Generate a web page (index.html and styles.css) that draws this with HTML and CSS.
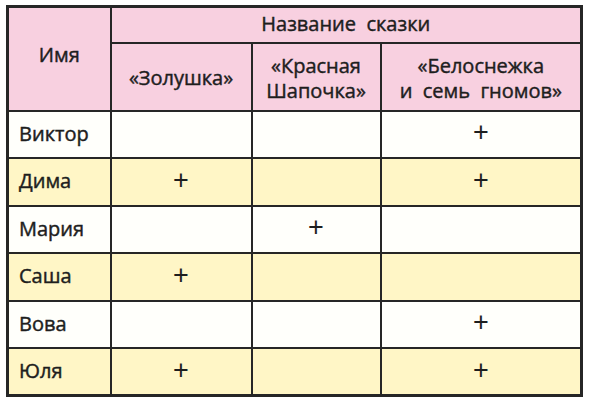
FILE: index.html
```html
<!DOCTYPE html>
<html lang="ru">
<head>
<meta charset="utf-8">
<link rel="stylesheet" href="styles.css">
</head>
<body>
<table class="tbl">
  <colgroup>
    <col class="c-name">
    <col class="c-a">
    <col class="c-b">
    <col class="c-c">
  </colgroup>
  <thead>
    <tr class="h1">
      <th rowspan="2" class="hname">Имя</th>
      <th colspan="3" class="htitle">Название&nbsp;&nbsp;сказки</th>
    </tr>
    <tr class="h2">
      <th>«Золушка»</th>
      <th>«Красная<br>Шапочка»</th>
      <th>«Белоснежка<br>и&nbsp;&nbsp;семь&nbsp;&nbsp;гномов»</th>
    </tr>
  </thead>
  <tbody>
    <tr class="w"><td class="n">Виктор</td><td></td><td></td><td class="p">+</td></tr>
    <tr class="y"><td class="n">Дима</td><td class="p">+</td><td></td><td class="p">+</td></tr>
    <tr class="w"><td class="n">Мария</td><td></td><td class="p">+</td><td></td></tr>
    <tr class="y"><td class="n">Саша</td><td class="p">+</td><td></td><td></td></tr>
    <tr class="w"><td class="n">Вова</td><td></td><td></td><td class="p">+</td></tr>
    <tr class="y"><td class="n">Юля</td><td class="p">+</td><td></td><td class="p">+</td></tr>
  </tbody>
</table>
</body>
</html>
```

FILE: styles.css
```css
html, body {
  margin: 0;
  padding: 0;
  background: #ffffff;
}
body {
  padding: 5px 0 0 6px;
  font-family: "Open Sans", "Noto Sans", sans-serif;
  color: #1e1e1e;
}
.tbl {
  border-collapse: collapse;
  width: 574px;
  table-layout: fixed;
  border: 3px solid #262626;
  font-size: 20px;
  font-weight: 400;
  -webkit-text-stroke: 0.45px #1e1e1e;
}
.c-name { width: 103px; }
.c-a { width: 141px; }
.c-b { width: 129px; }
.c-c { width: 201px; }
.tbl th, .tbl td {
  border: 2px solid #262626;
  padding: 0;
}
.tbl th {
  background: #f8d0e0;
  font-weight: 400;
  text-align: center;
  line-height: 25px;
}
.tbl th.hname {
  vertical-align: middle;
  padding-bottom: 8px;
}
.h1 { height: 36px; }
.h1 .htitle { padding-bottom: 2px; }
.h2 { height: 68px; }
.h2 th { padding-top: 2px; }
.tbl tbody tr { height: 47.5px; }
.tbl td.n {
  text-align: left;
  padding-left: 10px;
  padding-bottom: 2px;
}
.tbl td.p {
  text-align: center;
  font-family: "Liberation Sans", sans-serif;
  font-size: 27px;
  -webkit-text-stroke: 0;
  padding-bottom: 3px;
}
.w td { background: #fffffb; }
.y td { background: #fff6c6; }
```
